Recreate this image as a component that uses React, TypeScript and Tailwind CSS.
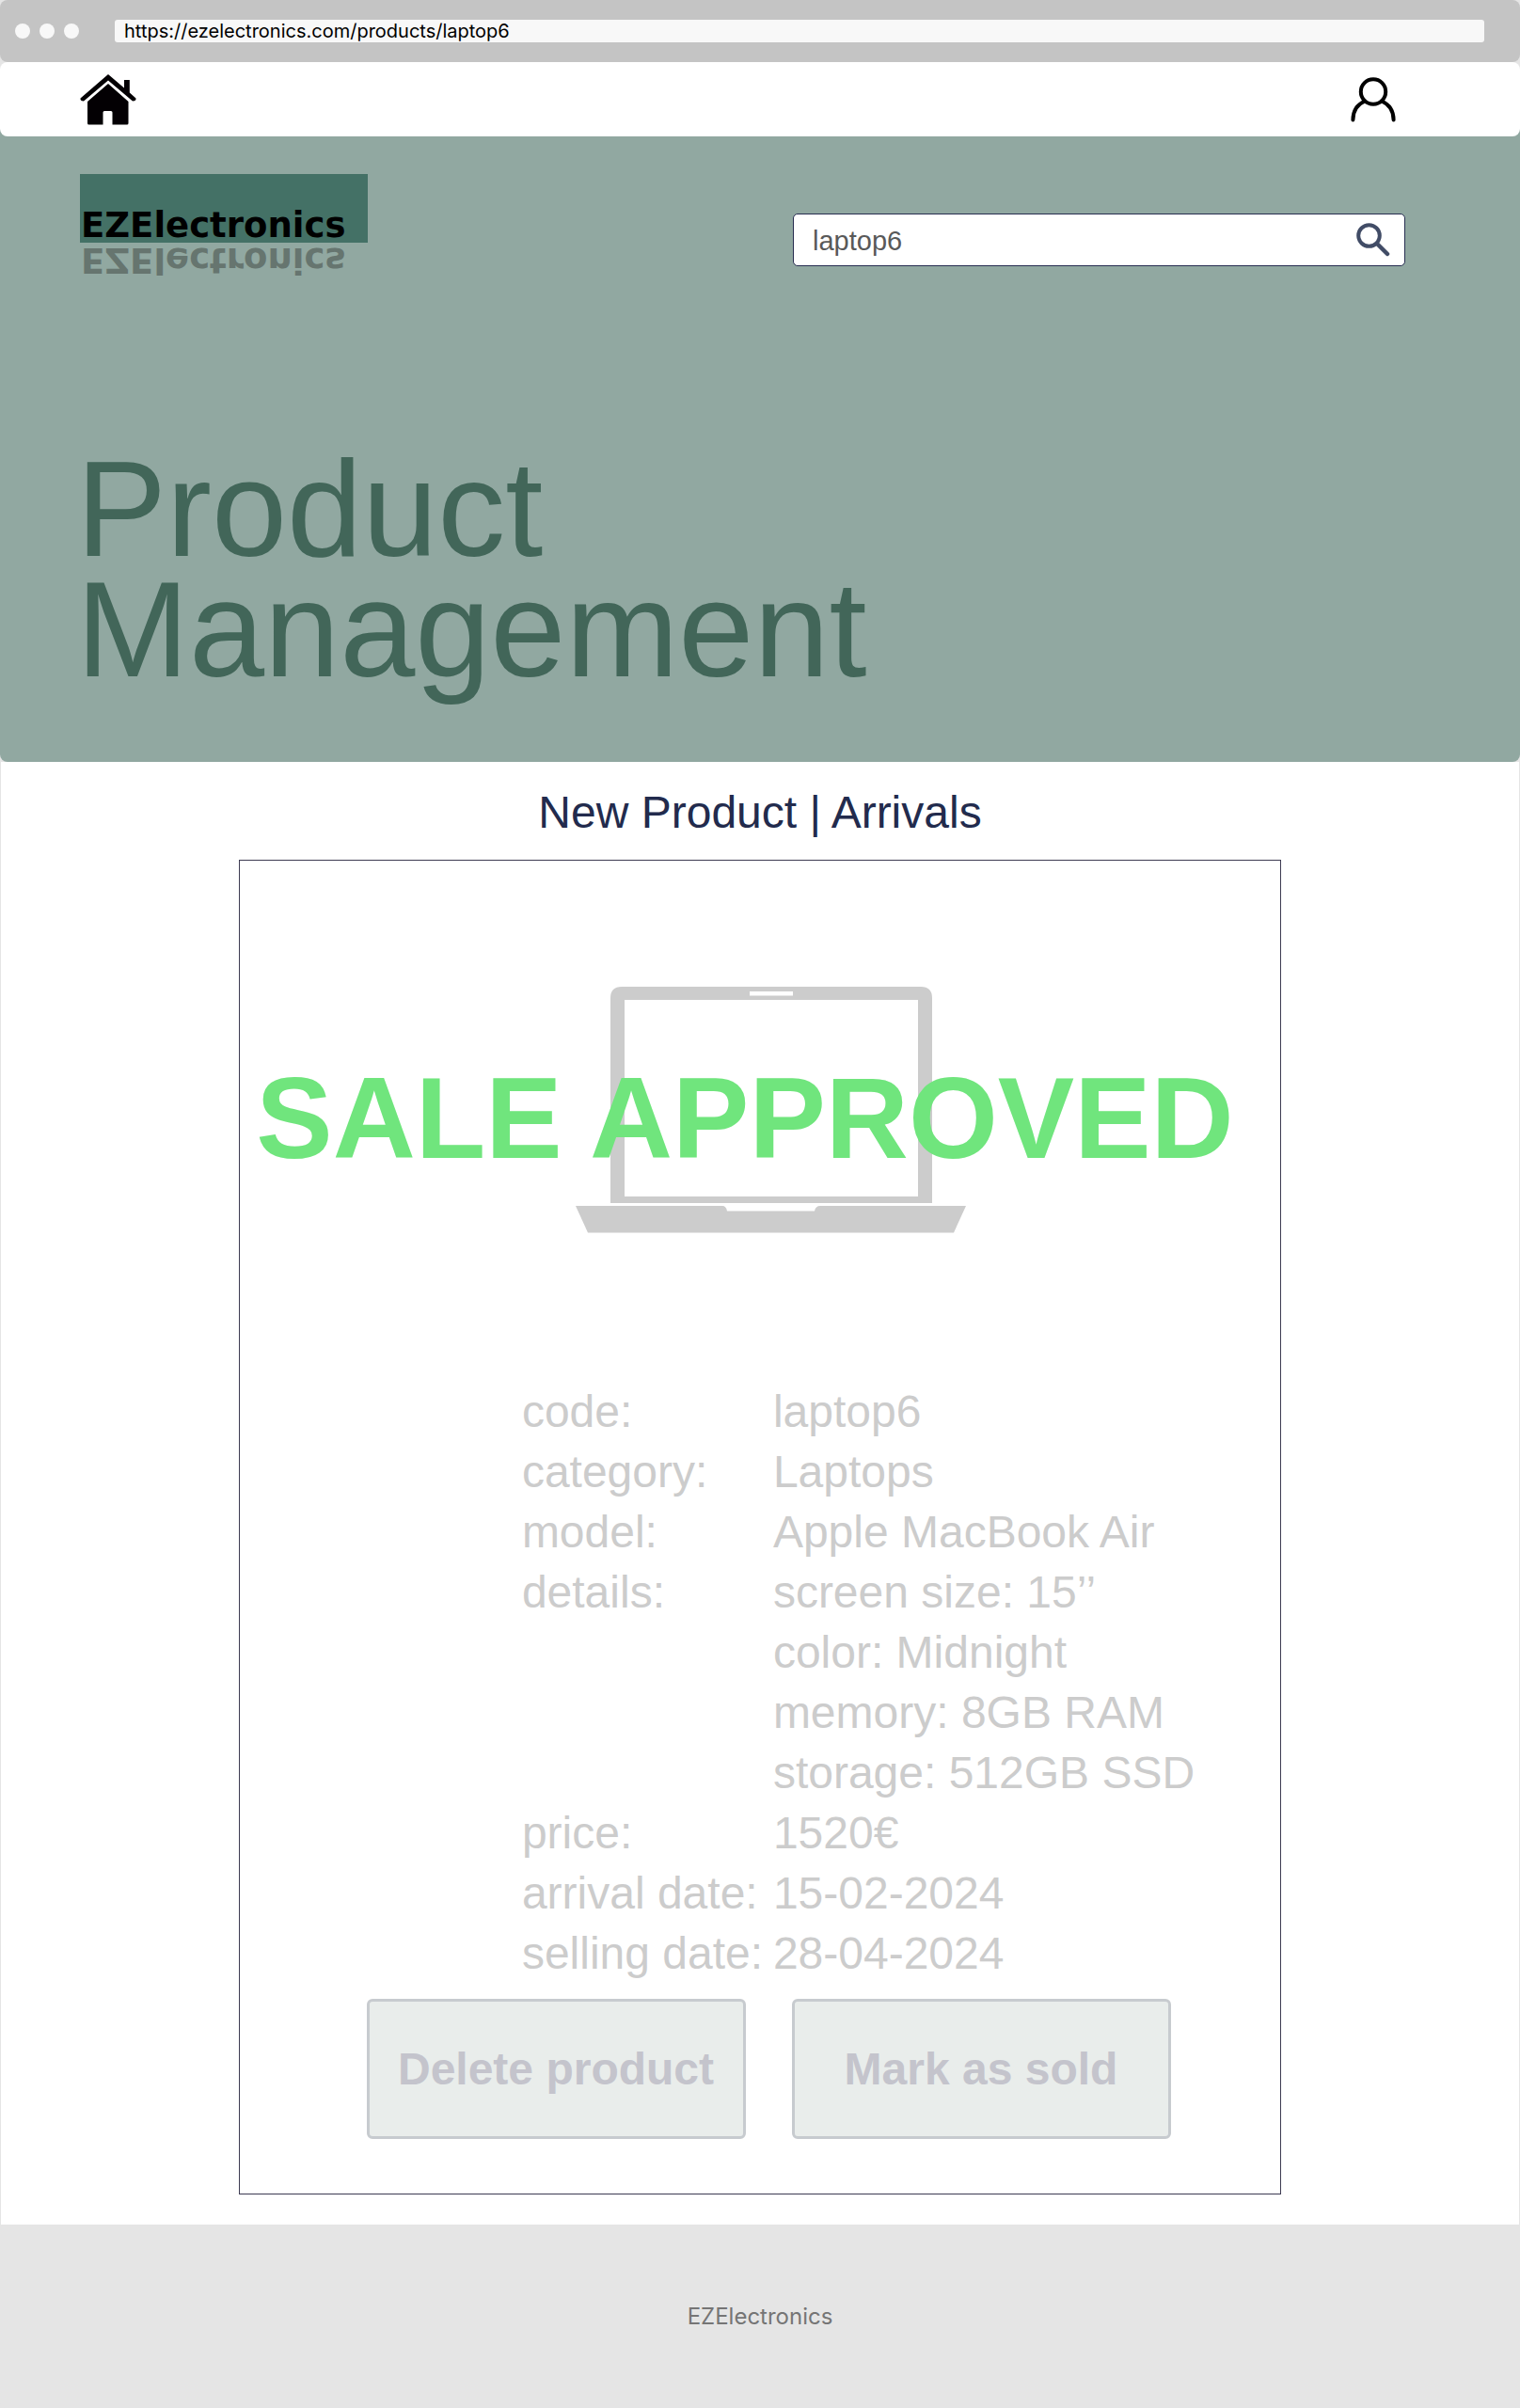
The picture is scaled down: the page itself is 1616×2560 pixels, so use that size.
import React from "react";

const rows: { label: string; values: string[] }[] = [
  { label: "code:", values: ["laptop6"] },
  { label: "category:", values: ["Laptops"] },
  { label: "model:", values: ["Apple MacBook Air"] },
  {
    label: "details:",
    values: ["screen size: 15’’", "color: Midnight", "memory: 8GB RAM", "storage: 512GB SSD"],
  },
  { label: "price:", values: ["1520€"] },
  { label: "arrival date:", values: ["15-02-2024"] },
  { label: "selling date:", values: ["28-04-2024"] },
];

function HomeIcon() {
  return (
    <svg width="60" height="54" viewBox="0 0 60 54" fill="#030003" aria-hidden="true">
      <path d="M30 0 L47 14.5 V6 H52.800 V19.500 L59.500 25.500 Q60 28.500 56 28.500 L30 6.600 L4 28.500 Q0 28.500 0.500 25.500 Z" />
      <path d="M30 10 L51.500 29 V52 Q51.500 53.500 50 53.500 H34.500 V40.500 Q34.500 39 33 39 H26 Q24.500 39 24.500 40.500 V53.500 H9.500 Q8 53.500 8 52 V29 Z" />
    </svg>
  );
}

function UserIcon() {
  return (
    <svg width="48" height="48" viewBox="0 0 48 48" fill="none" stroke="#000" strokeWidth="4" strokeLinecap="round" aria-hidden="true">
      <circle cx="24" cy="15.500" r="13.200" />
      <path d="M15 25.500 C7 29 2.400 36 2.400 45.500" />
      <path d="M33 25.500 C41 29 45.600 36 45.600 45.500" />
    </svg>
  );
}

function SearchIcon() {
  return (
    <svg width="36" height="36" viewBox="0 0 36 36" fill="none" stroke="#414c66" strokeWidth="4" aria-hidden="true">
      <circle cx="13.500" cy="13.500" r="11.300" />
      <path d="M22 22 L33 33" strokeWidth="4.500" strokeLinecap="round" />
    </svg>
  );
}

function LaptopPicture() {
  return (
    <svg width="416" height="264" viewBox="0 0 416 264" fill="#cccccc" role="img" aria-label="Laptop">
      <path
        fillRule="evenodd"
        d="M37 230 V12 Q37 0 49 0 H367 Q379 0 379 12 V230 Z M52 14 V223 H364 V14 Z M185 5 V9.500 H231 V5 Z"
      />
      <path d="M0 233 H156 Q160 233 161 238.500 H254 Q255 233 260 233 H415 L402 261.500 H13 Z" />
    </svg>
  );
}

export default function App() {
  return (
    <div className="flex min-h-screen flex-col bg-[#e5e5e5] font-['Liberation_Sans',Arial,sans-serif]">
      <div className="flex h-[66px] items-center rounded-lg bg-[#c4c4c4] pl-4 pr-[38px]">
        <div className="flex gap-[10px]">
          <span className="size-4 rounded-full bg-[#f8f8f8]" />
          <span className="size-4 rounded-full bg-[#f8f8f8]" />
          <span className="size-4 rounded-full bg-[#f8f8f8]" />
        </div>
        <input
          aria-label="Address"
          defaultValue="https://ezelectronics.com/products/laptop6"
          className="ml-[38px] h-6 min-w-0 flex-1 rounded-[3px] bg-[#f8f8f8] px-[10px] font-['Inter',sans-serif] text-[20px] leading-6 text-black outline-none"
        />
      </div>

      <div className="bg-linear-to-b from-[#e5e5e5] from-50% to-[#91a8a1] to-50%">
        <nav className="flex h-[79px] items-center justify-between rounded-lg bg-white pl-[85px] pr-[132px]">
          <a href="#home" aria-label="Home"><HomeIcon /></a>
          <a href="#account" aria-label="Account"><UserIcon /></a>
        </nav>
      </div>

      <header className="flex h-[665px] flex-col rounded-b-lg bg-[#91a8a1] px-[85px] pt-10">
        <div className="flex items-start justify-between">
          <div className="font-['DejaVu_Sans',sans-serif] text-[37px] font-bold leading-9">
            <div className="flex h-[73px] w-[306px] items-end bg-[#447166] pl-[1px] text-black">EZElectronics</div>
            <div aria-hidden="true" className="-scale-y-100 pl-[1px] text-[#66756f]">EZElectronics</div>
          </div>
          <form
            className="mr-[37px] mt-[42px] flex h-14 w-[651px] items-center rounded-[5px] border border-[#272d50] bg-white pl-5 pr-[15px]"
            onSubmit={(e) => e.preventDefault()}
          >
            <input
              aria-label="Search products"
              defaultValue="laptop6"
              className="min-w-0 flex-1 pt-[3px] text-[29px] text-[#595959] outline-none"
            />
            <button type="submit" aria-label="Search"><SearchIcon /></button>
          </form>
        </div>
        <h1 className="-ml-1 mt-[184px] text-[144px] leading-[128px] text-[#426659]">
          Product
          <br />
          Management
        </h1>
      </header>

      <main className="mx-px flex flex-col items-center bg-white pb-8">
        <h2 className="mt-6 text-[48px] leading-[60px] text-[#222b4d]">New Product | Arrivals</h2>
        <section className="mt-5 flex w-[1108px] max-w-full flex-col items-center border border-[#3d3b52] pb-[58px] pt-[134px]">
          <div className="relative pl-6">
            <LaptopPicture />
            <p className="absolute left-1/2 top-1/2 -translate-x-1/2 -translate-y-1/2 whitespace-nowrap pr-8 pt-4 text-[122px] font-bold leading-[128px] text-[#70e57d]">
              SALE APPROVED
            </p>
          </div>
          <table className="ml-[209px] mt-[156px] text-left text-[48px] leading-16 text-[#cccccc]">
            <tbody>
              {rows.map((row) => (
                <tr key={row.label} className="align-top">
                  <th scope="row" className="w-[267px] whitespace-nowrap p-0 font-normal">{row.label}</th>
                  <td className="whitespace-nowrap p-0">
                    {row.values.map((value) => (
                      <div key={value}>{value}</div>
                    ))}
                  </td>
                </tr>
              ))}
            </tbody>
          </table>
          <div className="mt-4 flex gap-[49px] pl-[18px] text-[48px] font-bold text-[#c4c4cc]">
            <button type="button" className="h-[149px] w-[403px] rounded-md border-3 border-[#c7cbcf] bg-[#e9edeb]">Delete product</button>
            <button type="button" className="h-[149px] w-[403px] rounded-md border-3 border-[#c7cbcf] bg-[#e9edeb]">Mark as sold</button>
          </div>
        </section>
      </main>

      <footer className="flex min-h-[195px] flex-1 items-center justify-center rounded-b-lg bg-[#e5e5e5] font-['Inter',sans-serif] text-2xl text-[#757575]">
        EZElectronics
      </footer>
    </div>
  );
}
